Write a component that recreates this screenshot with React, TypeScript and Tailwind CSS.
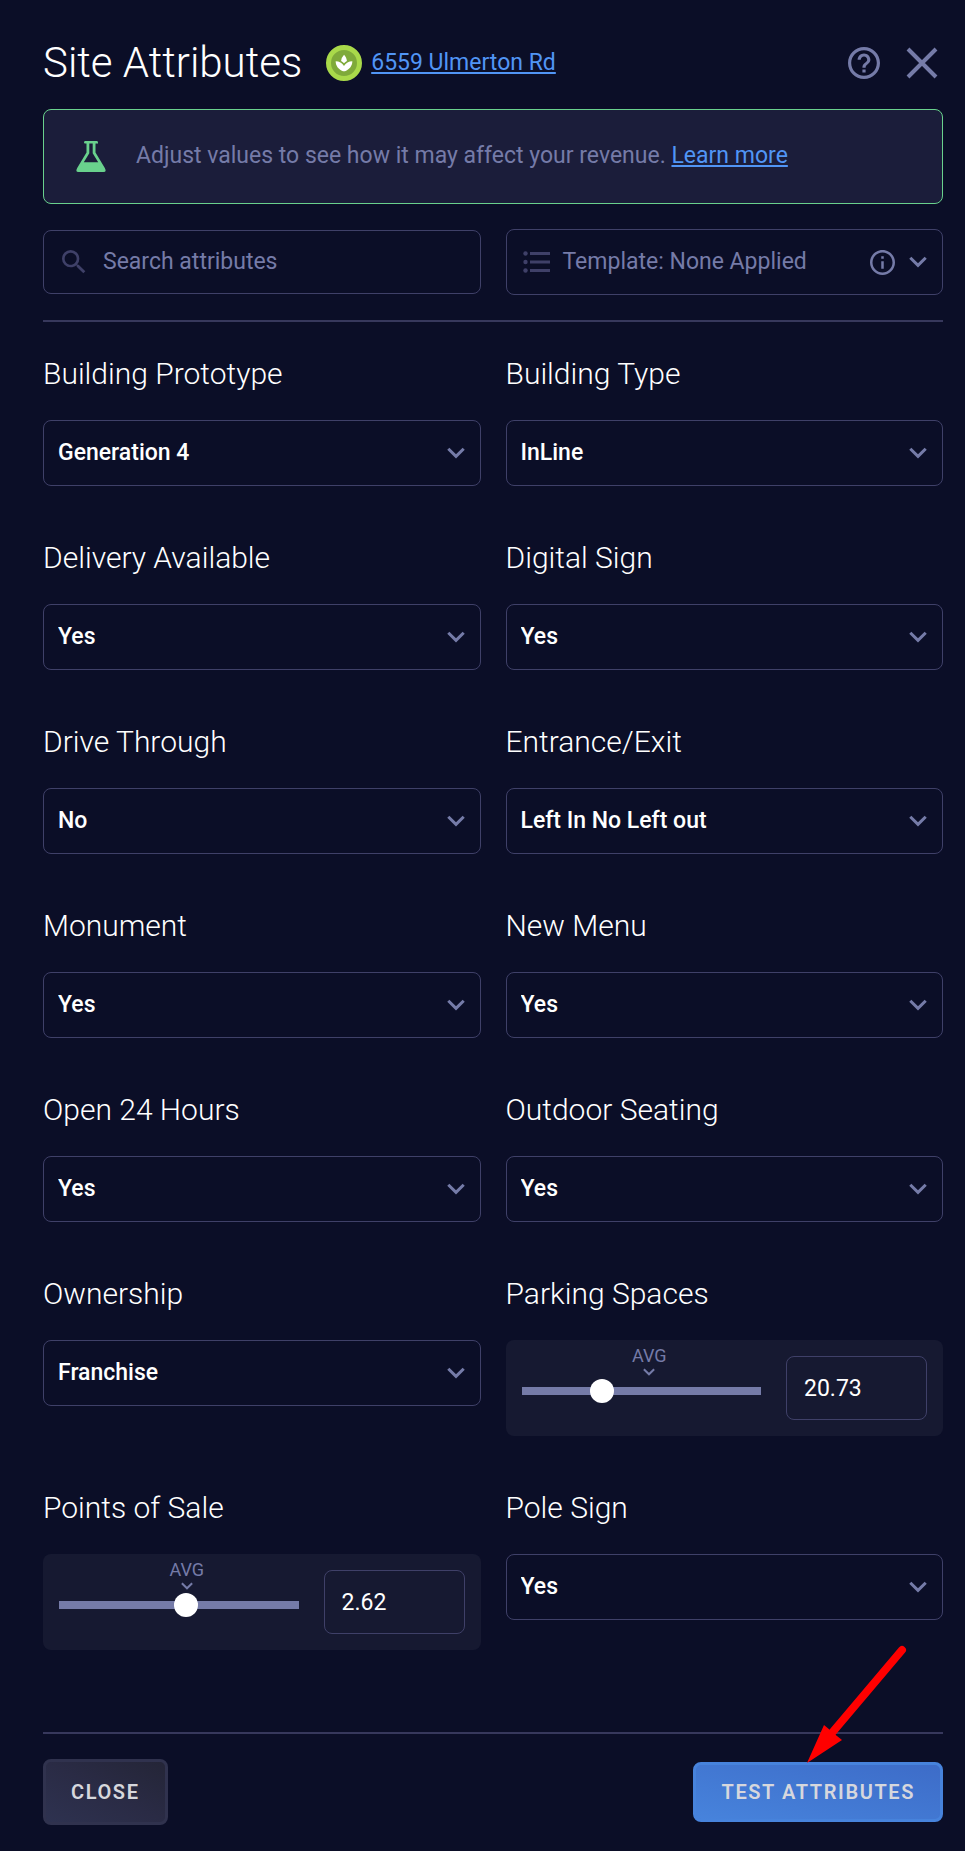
import { useState } from "react";
import { MdSearch, MdSpa } from "react-icons/md";

function Chevron({ className = "" }: { className?: string }) {
  return (
    <svg viewBox="0 0 18 12" className={className} fill="none" stroke="currentColor" strokeWidth="3" aria-hidden="true">
      <path d="M1.3 1.8 9 9.4 16.7 1.8" />
    </svg>
  );
}

function SelectField({ label, value }: { label: string; value: string }) {
  const id = label.toLowerCase().replace(/[^a-z0-9]+/g, "-");
  const others = ["Yes", "No"].filter((option) => option !== value);
  return (
    <div>
      <label htmlFor={id} className="block text-[30px] leading-9 font-light">
        {label}
      </label>
      <div className="mt-7 grid items-center">
        <select
          id={id}
          defaultValue={value}
          className="col-start-1 row-start-1 h-[66px] w-full appearance-none rounded-lg border border-[#3f4068] bg-transparent pr-12 pl-[14px] text-[23px] font-medium text-white"
        >
          <option>{value}</option>
          {others.map((option) => (
            <option key={option}>{option}</option>
          ))}
        </select>
        <Chevron className="pointer-events-none col-start-1 row-start-1 mr-4 h-3 w-[18px] justify-self-end text-[#757ba8]" />
      </div>
    </div>
  );
}

interface SliderProps {
  label: string;
  initial: number;
  min: number;
  max: number;
}

function SliderField({ label, initial, min, max }: SliderProps) {
  const [value, setValue] = useState(String(initial));
  const id = label.toLowerCase().replace(/[^a-z0-9]+/g, "-");
  return (
    <div>
      <label htmlFor={id} className="block text-[30px] leading-9 font-light">
        {label}
      </label>
      <div className="mt-7 flex h-24 items-center gap-[25px] rounded-lg bg-[#161931] px-4">
        <div className="flex h-full min-w-0 flex-1 flex-col items-center pt-1 text-[#757ba8]">
          <span className="pl-4 text-lg leading-6">AVG</span>
          <Chevron className="ml-4 h-2 w-3" />
          <input
            type="range"
            aria-label={label + " slider"}
            min={min}
            max={max}
            step="0.01"
            value={value}
            onChange={(event) => setValue(event.target.value)}
            className="mt-[3px] h-6 w-full appearance-none bg-transparent [&::-webkit-slider-runnable-track]:h-2 [&::-webkit-slider-runnable-track]:bg-[#757ba8] [&::-webkit-slider-thumb]:-mt-2 [&::-webkit-slider-thumb]:size-6 [&::-webkit-slider-thumb]:appearance-none [&::-webkit-slider-thumb]:rounded-full [&::-webkit-slider-thumb]:bg-white"
          />
        </div>
        <input
          id={id}
          value={value}
          onChange={(event) => setValue(event.target.value)}
          className="h-16 w-[141px] rounded-lg border border-[#3f4068] bg-transparent px-[17px] text-[23px] text-white"
        />
      </div>
    </div>
  );
}

export default function App() {
  return (
    <main className="min-h-screen bg-[#0b0e27] pt-9 pr-[22px] pb-[26px] pl-[43px] font-['Roboto',sans-serif] text-white">
      <header className="flex h-[54px] items-center">
        <h1 className="text-[42px] leading-[54px] font-light">Site Attributes</h1>
        <span className="ml-6 flex size-9 shrink-0 items-center justify-center rounded-full border-[5px] border-[#a9d94a] bg-[#7faa3a]">
          <MdSpa className="size-5" />
        </span>
        <a href="#site" className="ml-[9px] text-[23px] text-[#5195f5] underline decoration-2 underline-offset-2">
          6559 Ulmerton Rd
        </a>
        <div className="ml-auto flex items-center gap-[26px] pr-[5px] text-[#757ba8]">
          <button type="button" aria-label="Help">
            <svg viewBox="2 2 20 20" className="size-8" fill="currentColor">
              <path d="M11 18h2v-2h-2v2zm1-16C6.48 2 2 6.48 2 12s4.480 10 10 10 10-4.480 10-10S17.520 2 12 2zm0 18c-4.410 0-8-3.590-8-8s3.590-8 8-8 8 3.590 8 8-3.590 8-8 8zm0-14c-2.210 0-4 1.790-4 4h2c0-1.100.9-2 2-2s2 .9 2 2c0 2-3 1.750-3 5h2c0-2.250 3-2.500 3-5 0-2.210-1.790-4-4-4z" />
            </svg>
          </button>
          <button type="button" aria-label="Close panel">
            <svg viewBox="0 0 32 32" className="size-8" fill="none" stroke="currentColor" strokeWidth="4">
              <path d="M2 2 30 30M30 2 2 30" />
            </svg>
          </button>
        </div>
      </header>

      <p className="mt-[19px] flex h-[95px] items-center rounded-lg border border-[#69d18d] bg-[#1b1d3a] pl-8 text-[23px] text-[#757ba8]">
        <svg viewBox="0 0 30 32" className="mr-[30px] h-8 w-[30px] shrink-0 text-[#69d18d]" aria-hidden="true">
          <path fill="currentColor" fillRule="evenodd" d="M9 0h12q1 0 1 1.500T21 2.600h-1.500v8.900l9.300 15.500Q31 31 27.500 31h-25Q-1 31 1.200 27L10.500 11.500V2.600H9Q8 2.600 8 1.500T9 0Zm4.300 2.600v9.700L7.800 21.300h14.400l-5.500-9V2.600Z" />
        </svg>
        <span>
          Adjust values to see how it may affect your revenue.{" "}
          <a href="#learn-more" className="text-[#5195f5] underline decoration-2 underline-offset-2">
            Learn more
          </a>
        </span>
      </p>

      <div className="mt-[25px] grid grid-cols-2 items-center gap-[25px]">
        <label className="flex h-16 items-center rounded-lg border border-[#3f4068] pl-[14px] text-[#3f4068]">
          <MdSearch className="size-8" />
          <input
            type="search"
            aria-label="Search attributes"
            placeholder="Search attributes"
            className="ml-[13px] min-w-0 flex-1 bg-transparent text-[23px] text-white outline-none placeholder:text-[#757ba8]"
          />
        </label>
        <button type="button" className="flex h-[66px] items-center rounded-lg border border-[#3f4068] pr-[15px] pl-4 text-[23px] text-[#757ba8]">
          <svg viewBox="0 0 27 22" className="mr-[13px] h-[22px] w-[27px] text-[#3f4068]" fill="currentColor" aria-hidden="true">
            <circle cx="2.500" cy="2.500" r="2.200" />
            <circle cx="2.500" cy="11" r="2.200" />
            <circle cx="2.500" cy="19.500" r="2.200" />
            <path d="M7 1h20v3H7zM7 9.500h20v3H7zM7 18h20v3H7z" />
          </svg>
          Template: None Applied
          <svg viewBox="2 2 20 20" className="mr-[14px] ml-auto size-[25px]" fill="currentColor" aria-hidden="true">
            <path d="M11 7h2v2h-2zm0 4h2v6h-2zm1-9C6.480 2 2 6.480 2 12s4.480 10 10 10 10-4.480 10-10S17.520 2 12 2zm0 18c-4.410 0-8-3.590-8-8s3.590-8 8-8 8 3.590 8 8-3.590 8-8 8z" />
          </svg>
          <Chevron className="h-3 w-[18px]" />
        </button>
      </div>

      <hr className="mt-[25px] border-t-2 border-[#37385c]" />

      <section className="mt-[34px] grid grid-cols-2 gap-x-[25px] gap-y-[54px]">
        <SelectField label="Building Prototype" value="Generation 4" />
        <SelectField label="Building Type" value="InLine" />
        <SelectField label="Delivery Available" value="Yes" />
        <SelectField label="Digital Sign" value="Yes" />
        <SelectField label="Drive Through" value="No" />
        <SelectField label="Entrance/Exit" value="Left In No Left out" />
        <SelectField label="Monument" value="Yes" />
        <SelectField label="New Menu" value="Yes" />
        <SelectField label="Open 24 Hours" value="Yes" />
        <SelectField label="Outdoor Seating" value="Yes" />
        <SelectField label="Ownership" value="Franchise" />
        <SliderField label="Parking Spaces" initial={20.73} min={0} max={65} />
        <SliderField label="Points of Sale" initial={2.62} min={0} max={4.9} />
        <SelectField label="Pole Sign" value="Yes" />
      </section>

      <footer className="relative mt-[82px] flex items-center justify-between border-t-2 border-[#37385c] pt-[25px]">
        <button type="button" className="h-[66px] rounded-lg border-[3px] border-[#30324e] bg-linear-to-tr from-[#2e3250] via-[#2a2b45] to-[#242537] px-[25px] text-xl font-semibold tracking-[0.08em] text-[#d6d7dd]">
          CLOSE
        </button>
        <button type="button" className="h-[60px] rounded-lg border-[3px] border-[#4783dc] bg-linear-to-tr from-[#4783dc] to-[#3d6cc8] px-[25px] text-xl font-semibold tracking-[0.08em] text-[#d6d7dd]">
          TEST ATTRIBUTES
        </button>
        <svg viewBox="0 0 100 118" className="pointer-events-none absolute right-[36px] bottom-[62px] h-[118px] w-[100px]" aria-hidden="true">
          <path d="M95 5 24 89" stroke="#ff0000" strokeWidth="8" strokeLinecap="round" />
          <path d="M0 118 17 80l6 5 7 6 5 4Z" fill="#ff0000" />
        </svg>
      </footer>
    </main>
  );
}
